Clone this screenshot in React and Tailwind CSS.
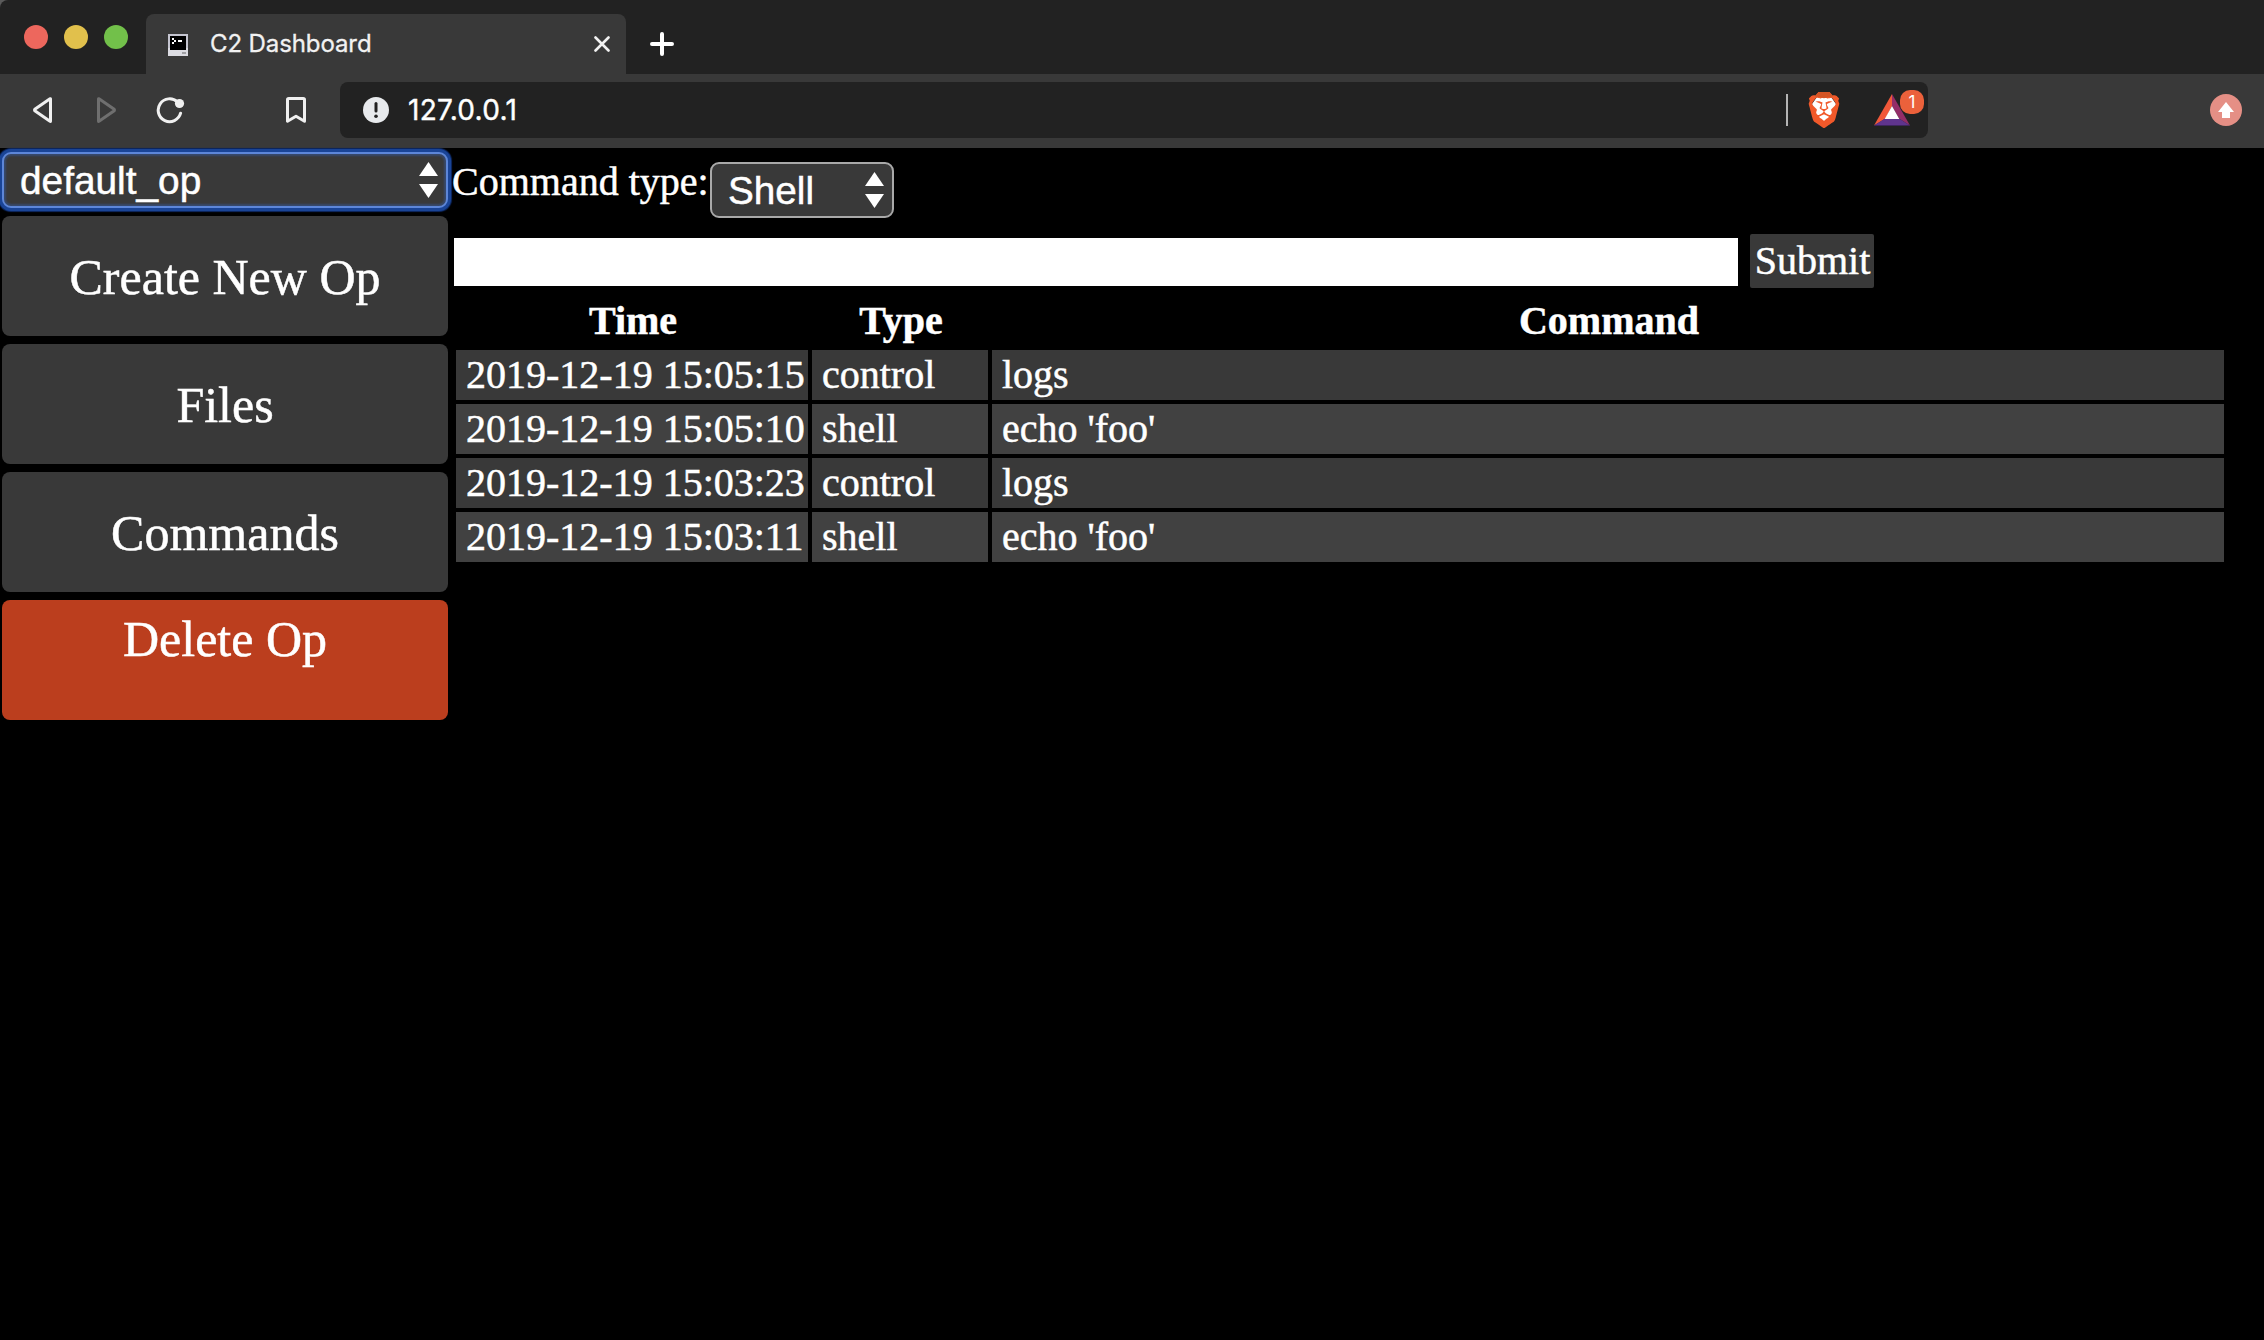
import React from "react";
import { SiBrave } from "react-icons/si";

const rows = [
  ["2019-12-19 15:05:15", "control", "logs"],
  ["2019-12-19 15:05:10", "shell", "echo 'foo'"],
  ["2019-12-19 15:03:23", "control", "logs"],
  ["2019-12-19 15:03:11", "shell", "echo 'foo'"],
];

function Arrows() {
  return (
    <svg width="19" height="36" viewBox="0 0 19 36" fill="#fff" className="shrink-0">
      <path d="M9.5 0 L19 14 H0 Z" />
      <path d="M9.5 36 L19 22 H0 Z" />
    </svg>
  );
}

function TabStrip() {
  return (
    <div className="h-[74px] bg-[#222222] flex items-end rounded-tl-lg">
      <div className="flex gap-4 pl-6 w-[146px] h-[74px] items-center shrink-0">
        <span className="size-6 rounded-full bg-[#ed675d]" />
        <span className="size-6 rounded-full bg-[#e1c04c]" />
        <span className="size-6 rounded-full bg-[#72c04a]" />
      </div>
      <div className="w-[480px] h-[60px] bg-[#393939] rounded-t-lg flex items-center pl-[22px] pr-4">
        <svg width="20" height="22" viewBox="0 0 20 22" className="shrink-0 mt-[2px]" shapeRendering="crispEdges">
          <rect width="20" height="22" fill="#dcdce2" />
          <rect width="20" height="14" fill="#c5c5d0" />
          <rect x="2" y="2" width="16" height="14" fill="#000" />
          <path d="M4 4h2v2H4z M6 6h2v2H6z M4 8h2v2H4z M10 6h4v2h-4z" fill="#fff" />
          <rect x="14" y="18" width="4" height="2" fill="#a0a0a4" />
        </svg>
        <span className="pl-[22px] text-[24px] leading-[30px] font-['Inter',sans-serif] text-[#f2f2f2] tracking-[-0.1px] whitespace-nowrap grow [-webkit-text-stroke:0.3px]">
          C2 Dashboard
        </span>
        <svg width="16" height="16" viewBox="0 0 16 16" stroke="#f2f2f2" strokeWidth="2.6" strokeLinecap="round">
          <path d="M1.5 1.5 L14.5 14.5 M14.5 1.5 L1.5 14.5" />
        </svg>
      </div>
      <svg width="24" height="24" viewBox="0 0 24 24" stroke="#fff" strokeWidth="4" strokeLinecap="round" className="ml-6 mb-[18px]">
        <path d="M12 2 V22 M2 12 H22" />
      </svg>
    </div>
  );
}

function Toolbar() {
  return (
    <div className="h-[74px] bg-[#393939] flex items-center pb-[2px]">
      <div className="flex items-center w-[340px] pl-[32px] shrink-0">
        <svg width="21" height="28" viewBox="0 0 21 28" fill="none" stroke="#f0f0f0" strokeWidth="3" strokeLinejoin="round">
          <path d="M18.5 2.8 V25.2 Q18.5 25.6 18 25.3 L2.8 14.8 Q2.2 14 2.8 13.2 L18 2.7 Z" />
        </svg>
        <svg width="21" height="28" viewBox="0 0 21 28" fill="none" stroke="#6f6f6f" strokeWidth="3" strokeLinejoin="round" className="ml-[43px]">
          <path d="M2.5 2.8 V25.2 Q2.5 25.6 3 25.3 L18.2 14.8 Q18.8 14 18.2 13.2 L3 2.7 Z" />
        </svg>
        <svg width="30" height="28" viewBox="0 0 30 28" fill="none" className="ml-[38px]">
          <path d="M22.5 6 A11.4 11.4 0 1 0 25.6 17.2" stroke="#f0f0f0" strokeWidth="3" strokeLinecap="round" />
          <circle cx="24.5" cy="7.5" r="4.6" fill="#f0f0f0" />
        </svg>
        <svg width="22" height="28" viewBox="0 0 22 28" fill="none" stroke="#f0f0f0" strokeWidth="3" strokeLinejoin="round" className="ml-[100px]">
          <path d="M3.8 2.5 H18.2 Q19.5 2.5 19.5 3.8 V25.3 L11 20.3 L2.5 25.3 V3.8 Q2.5 2.5 3.8 2.5 Z" />
        </svg>
      </div>
      <div className="w-[1588px] h-[56px] bg-[#222222] rounded-lg flex items-center pl-[23px] pr-1">
        <svg width="26" height="26" viewBox="0 0 26 26">
          <circle cx="13" cy="13" r="13" fill="#e8eaed" />
          <path d="M13 6.5 V14" stroke="#222222" strokeWidth="3" strokeLinecap="round" />
          <circle cx="13" cy="19.3" r="1.8" fill="#222222" />
        </svg>
        <span className="pl-[19px] grow font-['Inter',sans-serif] text-[28px] leading-[40px] tracking-[0.3px] text-white [-webkit-text-stroke:0.4px]">
          127.0.0.1
        </span>
        <span className="w-[2px] h-8 bg-[#b4b4b4]" />
        <div className="relative ml-5 w-8 h-9">
          <svg width="32" height="36" viewBox="0 0 32 36" className="absolute inset-0">
            <path d="M9 5 H23 L28 12 L24 24 L16 30 L8 24 L4 12 Z" fill="#fff" />
          </svg>
          <SiBrave className="absolute -left-[2px] top-0 w-9 h-9 text-[#f1592a]" />
          <svg width="32" height="36" viewBox="0 0 32 36" className="absolute inset-0">
            <path d="M11 0 H21 L25 4.6 Q20 5.2 16 6.2 Q12 5.2 7 4.6 Z" fill="#d55424" />
          </svg>
        </div>
        <div className="relative ml-[34px] w-[50px] h-[40px]">
          <svg width="36" height="32" viewBox="0 0 36 32" className="absolute left-0 top-1">
            <path d="M18 0 L0 31.5 L11.5 24.5 L18 12 Z" fill="#f1583a" />
            <path d="M18 0 L36 31.5 L25 24.5 L18 12 Z" fill="#932d68" />
            <path d="M0 31.5 H36 L25 24.5 H11 Z" fill="#5f348d" />
            <path d="M0 31.5 H36 V32 H0Z" fill="#3d2060" />
            <path d="M18 12 L25.3 25 H10.7 Z" fill="#fff" />
          </svg>
          <span className="absolute left-[26px] top-0 w-6 h-6 rounded-[10px] bg-[#eb613b] text-white text-[17px] leading-6 text-center font-['Inter',sans-serif]">
            1
          </span>
        </div>
      </div>
      <svg width="32" height="32" viewBox="0 0 32 32" className="ml-auto mr-[22px]">
        <circle cx="16" cy="16" r="16" fill="#e58f85" />
        <path d="M16 8 L24 18 H20 V24 H12 V18 H8 Z" fill="#fff" />
      </svg>
    </div>
  );
}

function SideButton({ children }) {
  return (
    <button className="block w-[446px] h-[120px] rounded-lg bg-[#393939] text-[50px] leading-[117px] pt-[3px] text-white text-center">
      {children}
    </button>
  );
}

function Sidebar() {
  return (
    <div className="w-[454px] shrink-0 pl-[2px] pt-1 flex flex-col gap-2">
      <div className="w-[446px] h-14 rounded-[9px] border-2 border-[#5d86d8] bg-[#393939] shadow-[0_0_0_3px_#1a4496,0_0_1px_4px_#0e2a66,inset_0_0_2px_2px_#37496c] flex items-center justify-between pl-4 pr-2 text-white">
        <span className="font-['Liberation_Sans',sans-serif] text-[38.8px] leading-[48px] pt-[2px]">default_op</span>
        <Arrows />
      </div>
      <SideButton>Create New Op</SideButton>
      <SideButton>Files</SideButton>
      <SideButton>Commands</SideButton>
      <button className="block w-[446px] h-[120px] rounded-lg bg-[#bb3e1e] text-[50px] leading-[56px] pt-[11px] pb-[53px] text-white text-center">
        Delete Op
      </button>
    </div>
  );
}

export default function App() {
  return (
    <div className="w-[2264px] h-[1340px] bg-black overflow-hidden font-['Liberation_Serif',serif]">
      <div className="bg-[#5a5a5a]">
        <TabStrip />
      </div>
      <Toolbar />
      <div className="flex text-white text-[40px] [-webkit-text-stroke:0.5px]">
        <Sidebar />
        <main className="grow">
          <div className="flex items-start h-[86px]">
            <span className="w-[256px] -ml-[2px] pt-[9px] leading-[50px] whitespace-nowrap">Command type:</span>
            <div className="mt-[14px] ml-[2px] w-[184px] h-14 rounded-[9px] border-2 border-[#a9a9a9] bg-[#393939] flex items-center justify-between pl-4 pr-2">
              <span className="font-['Liberation_Sans',sans-serif] text-[38.7px] leading-[48px] pt-px">Shell</span>
              <Arrows />
            </div>
          </div>
          <div className="flex items-center h-[54px]">
            <input className="w-[1284px] h-12 bg-white mt-0.5" />
            <button className="ml-3 w-[124px] h-[54px] rounded-[2px] bg-[#393939] leading-[54px] pl-px text-center">Submit</button>
          </div>
          <div className="grid grid-cols-[352px_176px_1232px] auto-rows-[50px] gap-1 pl-[2px] pt-2 leading-[50px]">
            {["Time", "Type", "Command"].map((h) => (
              <div key={h} className="font-bold text-center pl-[2px]">{h}</div>
            ))}
            {rows.map((r, i) =>
              r.map((c, j) => (
                <div key={i + "-" + j} className={(i % 2 ? "bg-[#414141]" : "bg-[#393939]") + " pl-[10px] whitespace-nowrap"}>
                  {c}
                </div>
              ))
            )}
          </div>
        </main>
      </div>
    </div>
  );
}
